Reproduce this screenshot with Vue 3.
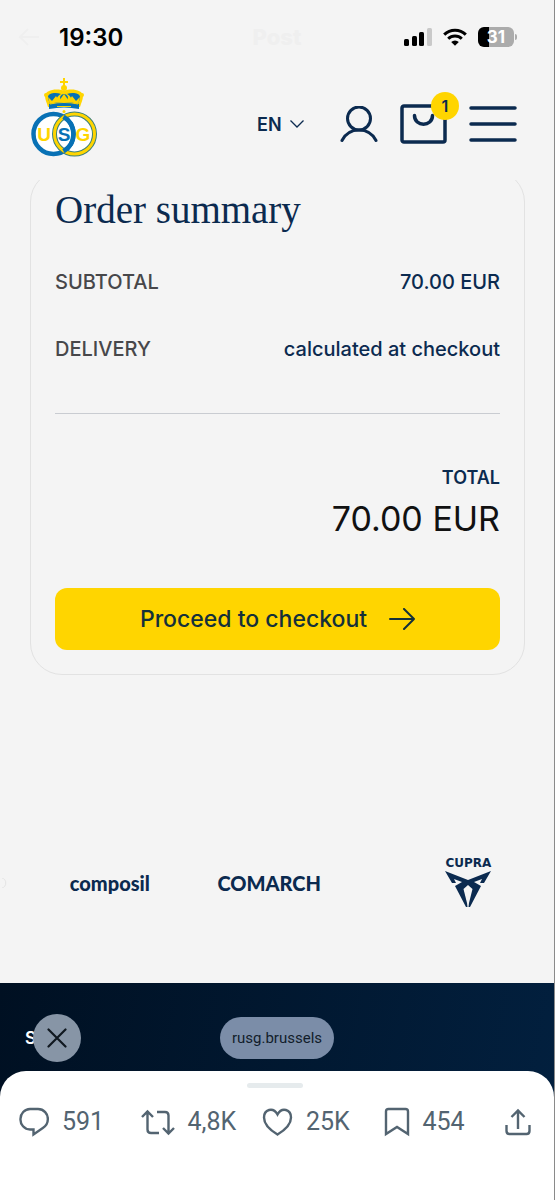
<template>
  <div class="screen">
    <!-- Status bar -->
    <div class="status-bar">
      <div class="ghost-nav" aria-hidden="true">
        <svg width="22" height="20" viewBox="0 0 22 20" fill="none" stroke="#efefef" stroke-width="2">
          <path d="M10 2 2 10l8 8M2 10h19"/>
        </svg>
        <span>Post</span>
      </div>
      <span class="clock">19:30</span>
      <div class="status-icons">
        <svg width="28" height="18" viewBox="0 0 28 18">
          <rect x="0" y="11" width="5" height="7" rx="1.5"/>
          <rect x="8" y="8" width="5" height="10" rx="1.5"/>
          <rect x="15" y="4" width="5" height="14" rx="1.5"/>
          <rect x="23" y="0" width="5" height="18" rx="1.5" fill="#c9c9c9"/>
        </svg>
        <svg width="24" height="18" viewBox="0 0 24 18" fill="none" stroke="#000" stroke-width="3">
          <path d="M1.2 6.6a15.4 15.4 0 0 1 21.6 0"/>
          <path d="M5.2 10.8a9.7 9.7 0 0 1 13.6 0"/>
          <path d="M12 17.8 8.2 14a5.5 5.5 0 0 1 7.6 0z" fill="#000" stroke="none"/>
        </svg>
        <div class="battery"><span>31</span></div>
      </div>
    </div>

    <!-- Header -->
    <header class="site-header">
      <a href="#" class="crest" aria-label="Home">
        <svg width="66" height="80" viewBox="0 0 66 80">
          <g fill="#ffd500" stroke="none">
            <path d="M32 0h2v3h3v2h-3v3h-2V5h-3V3h3z"/>
            <circle cx="33" cy="10" r="3"/>
            <path d="M14 18c0-6 12-8 19-5 7-3 19-1 19 5 0 4-2 7-3 11H17c-1-4-3-7-3-11z"/>
          </g>
          <path d="M17 19c0-4 8-5 13-3-4 2-5 5-5 9l-6 1c-1-3-2-5-2-7zM49 19c0-4-8-5-13-3 4 2 5 5 5 9l6 1c1-3 2-5 2-7zM29 19c1-2 2-3 4-3s3 1 4 3l-1 6h-6z" fill="#0871b5"/>
          <g fill="#ffd500">
            <circle cx="15" cy="17" r="2"/><circle cx="51" cy="17" r="2"/>
            <path d="m17 19 4 4 4-5 3 5 5-7 5 7 3-5 4 5 4-4-2 8H19z"/>
          </g>
          <path d="M18 26q15-4 30 0v5q-15-3-30 0z" fill="#0871b5"/>
          <path d="M19 26q14-3 28 0M26 28.500h14" fill="none" stroke="#ffd500" stroke-width="1.200"/>
          <circle cx="33" cy="33.500" r="1.500" fill="#ffd500"/>
          <circle cx="22.500" cy="56" r="20" fill="#fff"/>
          <circle cx="43.500" cy="56" r="20" fill="#fff"/>
          <circle cx="22.500" cy="56" r="20" fill="none" stroke="#0871b5" stroke-width="4.500"/>
          <circle cx="43.500" cy="56" r="20" fill="none" stroke="#3c7f7a" stroke-width="5"/>
          <circle cx="43.500" cy="56" r="20" fill="none" stroke="#ffd500" stroke-width="3"/>
          <path d="M32.500 38.700a20 20 0 0 1 0 34.600" fill="none" stroke="#0871b5" stroke-width="4.500"/>
          <g class="crest-letters" text-anchor="middle">
            <text x="13" y="63" fill="#ffd500">U</text>
            <text x="33" y="63" fill="#0871b5">S</text>
            <text x="52" y="63" fill="#ffd500">G</text>
          </g>
        </svg>
      </a>

      <nav class="header-tools">
        <label class="lang">
          <select v-model="lang" aria-label="Language">
            <option v-for="l in langs" :key="l">{{ l }}</option>
          </select>
          <svg width="14" height="8" viewBox="0 0 14 8" fill="none" stroke="#0b2a4f" stroke-width="1.3">
            <path d="M.5.5 7 7 13.5.5"/>
          </svg>
        </label>
        <button class="icon-btn" aria-label="Account">
          <svg width="38" height="36" viewBox="0 0 38 36" fill="none" stroke="#0b2a4f" stroke-width="3" stroke-linecap="round">
            <circle cx="19" cy="12.5" r="11.5"/>
            <path d="M2 34.5c7-14 27-14 34 0"/>
          </svg>
        </button>
        <button class="icon-btn bag" aria-label="Cart">
          <svg width="47" height="40" viewBox="0 0 47 40" fill="none" stroke="#0b2a4f" stroke-width="3.5" stroke-linecap="round">
            <rect x="2" y="2" width="43" height="36" rx="2"/>
            <path d="M14.5 11.500c0 11.500 18 11.500 18 0"/>
          </svg>
          <span class="badge">{{ cartCount }}</span>
        </button>
        <button class="icon-btn" aria-label="Menu">
          <svg width="48" height="36" viewBox="0 0 48 36" stroke="#0b2a4f" stroke-width="3.5" stroke-linecap="round">
            <path d="M2 2h44M2 18h44M2 34h44"/>
          </svg>
        </button>
      </nav>
    </header>

    <!-- Order summary -->
    <main class="content">
      <section class="summary-card">
        <h1>Order summary</h1>
        <dl class="summary-rows">
          <div v-for="row in rows" :key="row.label" class="summary-row">
            <dt>{{ row.label }}</dt>
            <dd>{{ row.value }}</dd>
          </div>
        </dl>
        <div class="total">
          <span class="total-label">TOTAL</span>
          <span class="total-value">70.00 EUR</span>
        </div>
        <button class="btn-checkout">
          Proceed to checkout
          <svg width="26" height="22" viewBox="0 0 26 22" fill="none" stroke="#14303a" stroke-width="2" stroke-linecap="round" stroke-linejoin="round">
            <path d="M1 11h24M15 1l10 10-10 10"/>
          </svg>
        </button>
      </section>
    </main>

    <!-- Sponsors -->
    <section class="sponsors">
      <svg class="sponsor-prev" width="7" height="10" viewBox="0 0 7 10" fill="none" stroke="#e4e4e4">
        <path d="M2 0c5 1 5 9 0 10"/>
      </svg>
      <span class="composil">composil</span>
      <span class="comarch">COMARCH</span>
      <div class="cupra">
        <span>CUPRA</span>
        <svg width="46" height="36" viewBox="0 0 46 36" fill="#0b2a4f">
          <path d="M0 0 23 9 46 0 39 12 35 12 37 8 29 11 36 15 25 36 23.500 36 24 32 27.500 18 23 14 18.500 18 22 32 22.500 36 21 36 10 15 17 11 9 8 11 12 7 12z"/>
        </svg>
      </div>
    </section>

    <!-- Footer with the in-app browser controls -->
    <footer class="site-footer">
      <div class="browser-bar">
        <div class="bar-left">
          <span class="footer-text">S</span>
          <button class="btn-close" aria-label="Close">
            <svg width="20" height="20" viewBox="0 0 20 20" fill="none" stroke="#101820" stroke-width="2.2" stroke-linecap="round">
              <path d="m1.500 1.500 17 17M18.500 1.500l-17 17"/>
            </svg>
          </button>
        </div>
        <a href="#" class="url-pill">rusg.brussels</a>
      </div>

      <div class="sheet">
        <span class="handle"></span>
        <div class="actions">
          <button aria-label="Reply">
            <svg width="30" height="30" viewBox="0 0 30 30">
              <path d="M11 2h8a9.800 9.800 0 0 1 9.800 10.500c0 4-2 6.500-5 8.500l-9.300 6.500v-5H11A9.800 9.800 0 0 1 1.500 12 9.800 9.800 0 0 1 11 2z"/>
            </svg>
            <span>591</span>
          </button>
          <button aria-label="Repost">
            <svg width="34" height="30" viewBox="0 0 34 30">
              <path d="M1 10 6.500 4.500 12 10M6.500 5v17.500q0 3.500 3.500 3.500h8M16 5h8q3.500 0 3.500 3.500V26M22 21l5.500 5.500L33 21"/>
            </svg>
            <span>4,8K</span>
          </button>
          <button aria-label="Like">
            <svg width="31" height="30" viewBox="0 0 31 30">
              <path d="M15.500 27.500C8 23 2 17 2 10.500 2 2.500 11-.5 15.500 7.500 20-.5 29 2.500 29 10.500c0 6.500-6 12.500-13.500 17z"/>
            </svg>
            <span>25K</span>
          </button>
          <button aria-label="Bookmark">
            <svg width="26" height="30" viewBox="0 0 26 30">
              <path d="M2 27V4.500Q2 2 4.500 2h17Q24 2 24 4.500V27l-11-7z"/>
            </svg>
            <span>454</span>
          </button>
          <button aria-label="Share">
            <svg width="26" height="30" viewBox="0 0 26 30">
              <path d="M6.500 10 13 3.500l6.500 6.500M13 4v18M1.500 18v6q0 3 3 3h17q3 0 3-3v-6"/>
            </svg>
          </button>
        </div>
      </div>
    </footer>
  </div>
</template>

<script setup>
import { ref } from 'vue'

const langs = ['EN', 'FR', 'NL']
const lang = ref('EN')
const cartCount = ref(1)

const rows = [
  { label: 'SUBTOTAL', value: '70.00 EUR' },
  { label: 'DELIVERY', value: 'calculated at checkout' },
]
</script>

<style>
body { margin: 0; background: #f4f4f4; }
</style>

<style scoped>
.screen {
  display: flex; flex-direction: column;
  min-height: 100vh; box-sizing: border-box;
  background: #f4f4f4; color: #0b2a4f;
  border-right: 1px solid #8a8a8a;
  font-family: Inter, 'Liberation Sans', sans-serif;
}
button, select { font-family: inherit; color: inherit; background: none; border: 0; padding: 0; cursor: pointer; }
a { color: inherit; text-decoration: none; }
svg { display: block; flex-shrink: 0; }

/* Status bar */
.status-bar {
  position: relative;
  display: flex; align-items: center; justify-content: space-between;
  height: 74px; padding: 0 40px 0 59px;
  color: #000;
}
.clock { font-size: 24px; font-weight: 600; }
.status-icons { display: flex; align-items: center; gap: 11px; }
.ghost-nav {
  position: absolute; inset: 0;
  display: grid; grid-template-columns: 1fr auto 1fr; align-items: center;
  padding: 0 18px;
  font-size: 22px; font-weight: 800; color: #efefef;
}
.battery {
  position: relative;
  width: 36px; height: 20px; border-radius: 6px;
  background: linear-gradient(90deg, #000 31%, #ababab 31%);
  color: #fff; font-size: 17px; font-weight: 700; line-height: 20px; text-align: center;
}
.battery::after {
  content: ''; position: absolute; left: 37px; top: 7px;
  width: 2px; height: 6px; border-radius: 0 2px 2px 0; background: #ababab;
}

/* Header */
.site-header {
  display: flex; align-items: flex-start; justify-content: space-between;
  padding: 4px 37px 22px 31px;
}
.crest-letters { font-family: 'Liberation Sans', sans-serif; font-size: 19px; font-weight: 700; }
.header-tools { display: flex; align-items: center; gap: 22px; padding-top: 26px; }
.lang { display: flex; align-items: center; gap: 8px; margin-right: 14px; }
.lang select { appearance: none; width: 25px; font-size: 18px; font-weight: 600; outline: none; }
.icon-btn { display: block; position: relative; }
.badge {
  position: absolute; top: -12px; right: -12px;
  width: 28px; height: 28px; border-radius: 50%;
  background: #ffd500;
  font-size: 16px; font-weight: 600; line-height: 28px; text-align: center;
}

/* Summary */
.content { overflow: hidden; padding: 0 29px 0 30px; }
.summary-card {
  margin-top: -10px; padding: 16px 24px 24px;
  border: 1px solid #e2e2e2; border-radius: 32px;
}
h1 {
  margin: 0;
  font-family: 'Liberation Serif', serif; font-size: 39px; font-weight: 400; line-height: 46px;
}
.summary-rows {
  display: flex; flex-direction: column; gap: 39px;
  margin: 35px 0 0; padding-bottom: 50px;
  border-bottom: 1px solid #c9ccd1;
}
.summary-row { display: flex; justify-content: space-between; font-size: 20px; font-weight: 500; line-height: 28px; }
.summary-row dt { color: #47474a; }
.summary-row dd { margin: 0; }
.total { display: flex; flex-direction: column; align-items: flex-end; padding: 50px 0 44px; }
.total-label { font-size: 18px; font-weight: 600; line-height: 28px; }
.total-value { margin-top: 2px; font-size: 34px; font-weight: 400; line-height: 50px; color: #111; }
.btn-checkout {
  display: flex; align-items: center; justify-content: center; gap: 22px;
  width: 100%; height: 62px; border-radius: 12px;
  background: #ffd500; color: #14303a;
  font-size: 23px; font-weight: 500;
}

/* Sponsors */
.sponsors {
  position: relative;
  display: grid; grid-template-columns: 23fr 57fr 43fr; align-items: center; justify-items: center;
  padding: 184px 0 76px 64px;
}
.sponsor-prev { position: absolute; left: 0; bottom: 95px; }
.composil, .comarch { font-family: Lato, sans-serif; font-weight: 900; font-size: 20px; line-height: 24px; }
.cupra { display: flex; flex-direction: column; align-items: center; gap: 4px; }
.cupra span { font-family: 'DejaVu Sans', sans-serif; font-size: 12px; font-weight: 700; line-height: 8px; }

/* Footer */
.site-footer {
  flex: 1; display: flex; flex-direction: column;
  background: linear-gradient(100deg, #001022, #02203f);
}
.browser-bar {
  display: grid; grid-template-columns: 1fr auto 1fr; align-items: center;
  padding: 31px 0 9px;
}
.bar-left { display: flex; align-items: center; padding-left: 25px; }
.footer-text { width: 8px; font-size: 17px; font-weight: 600; color: #fff; }
.btn-close {
  position: relative;
  display: flex; align-items: center; justify-content: center;
  width: 48px; height: 48px; border-radius: 50%;
  background: #8795a6;
}
.url-pill {
  padding: 0 12px; border-radius: 21px;
  background: #7b8da8; color: #121d2b;
  font-family: Roboto, sans-serif; font-size: 15px; line-height: 42px;
}
.sheet {
  flex: 1; display: flex; flex-direction: column; align-items: center;
  border-radius: 26px 26px 0 0; background: #fff;
  padding: 12px 23px 60px 19px;
}
.handle { width: 56px; height: 5px; border-radius: 3px; background: #e6ebed; }
.actions {
  align-self: stretch;
  display: grid; grid-template-columns: repeat(4, 1fr) auto;
  margin-top: 17px;
  color: #536471;
}
.actions button { display: flex; align-items: center; gap: 13px; }
.actions svg { fill: none; stroke: #536471; stroke-width: 2.4px; }
.actions span { font-family: Roboto, sans-serif; font-size: 25px; font-weight: 400; line-height: 34px; }
</style>
